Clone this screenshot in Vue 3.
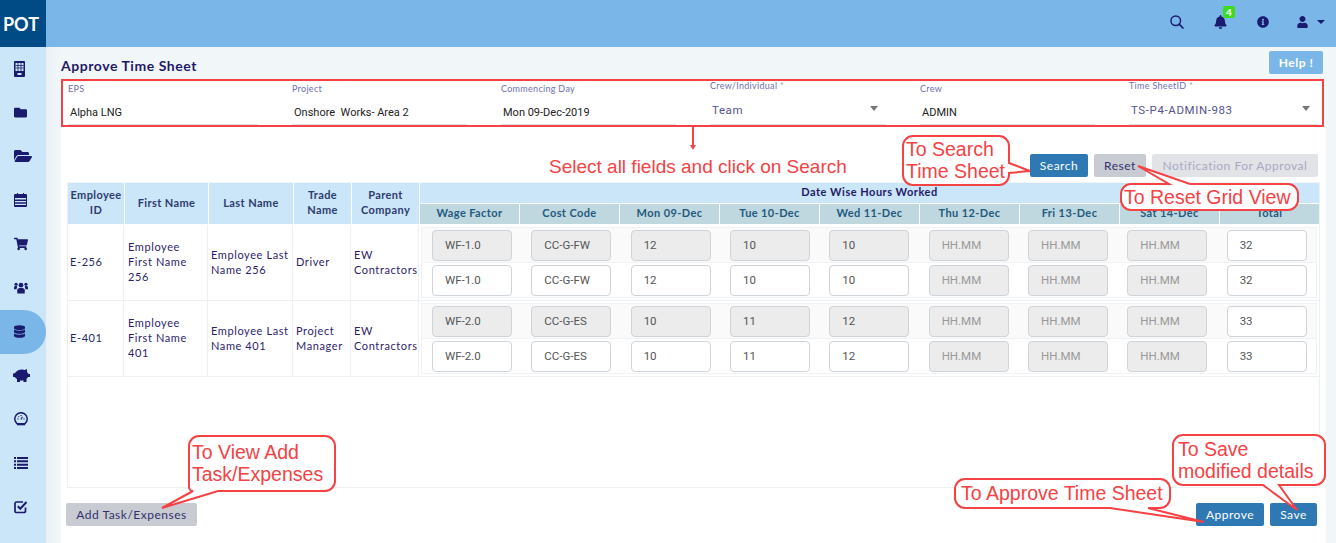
<script setup>
const filters = [
  { label: 'EPS', value: 'Alpha LNG', width: '190px' },
  { label: 'Project', value: 'Onshore  Works- Area 2', width: '175px' },
  { label: 'Commencing Day', value: 'Mon 09-Dec-2019', width: '175px' },
  { label: 'Crew/Individual', value: 'Team', width: '176px', select: true },
  { label: 'Crew', value: 'ADMIN', width: '175px' },
  { label: 'Time SheetID', value: 'TS-P4-ADMIN-983', width: '189px', select: true }
]

const days = ['Mon 09-Dec', 'Tue 10-Dec', 'Wed 11-Dec', 'Thu 12-Dec', 'Fri 13-Dec', 'Sat 14-Dec']
const subHeads = ['Wage Factor', 'Cost Code', ...days, 'Total']

const employees = [
  {
    id: 'E-256',
    first: 'Employee First Name 256',
    last: 'Employee Last Name 256',
    trade: 'Driver',
    company: 'EW Contractors',
    wage: 'WF-1.0',
    code: 'CC-G-FW',
    hours: ['12', '10', '10'],
    total: '32'
  },
  {
    id: 'E-401',
    first: 'Employee First Name 401',
    last: 'Employee Last Name 401',
    trade: 'Project Manager',
    company: 'EW Contractors',
    wage: 'WF-2.0',
    code: 'CC-G-ES',
    hours: ['10', '11', '12'],
    total: '33'
  }
]

function rowCells(emp, locked) {
  return [
    { text: emp.wage, locked },
    { text: emp.code, locked },
    ...emp.hours.map((h) => ({ text: h, locked })),
    { text: '', locked: true },
    { text: '', locked: true },
    { text: '', locked: true },
    { text: emp.total, locked: false }
  ]
}
</script>

<template>
  <div class="page">
    <header class="topbar">
      <div class="logo">POT</div>
      <div class="top-icons">
        <svg width="14" height="14" viewBox="0 0 512 512"><circle cx="210" cy="210" r="175" fill="none" stroke="#1a1a6e" stroke-width="52"/><path d="M335 335l140 140" stroke="#1a1a6e" stroke-width="62" stroke-linecap="round"/></svg>
        <span class="bell">
          <svg width="13" height="14" viewBox="0 0 448 512"><path fill="#1a1a6e" d="M224 512c35.32 0 63.97-28.65 63.97-64H160.03c0 35.35 28.65 64 63.97 64zm215.39-149.71c-19.32-20.76-55.47-51.99-55.47-154.29 0-77.7-54.48-139.9-127.94-155.16V32c0-17.67-14.32-32-31.98-32s-31.98 14.33-31.98 32v20.84C118.56 68.1 64.08 130.3 64.08 208c0 102.3-36.15 133.53-55.47 154.29-6 6.45-8.66 14.16-8.61 21.71.11 16.4 12.98 32 32.1 32h383.8c19.12 0 32-15.6 32.1-32 .05-7.55-2.61-15.27-8.61-21.71z"/></svg>
          <b class="badge">4</b>
        </span>
        <svg width="12" height="12" viewBox="0 0 512 512"><path fill="#1a1a6e" d="M256 8C119.043 8 8 119.083 8 256c0 136.997 111.043 248 248 248s248-111.003 248-248C504 119.083 392.957 8 256 8zm0 110c23.196 0 42 18.804 42 42s-18.804 42-42 42-42-18.804-42-42 18.804-42 42-42zm56 254c0 6.627-5.373 12-12 12h-88c-6.627 0-12-5.373-12-12v-24c0-6.627 5.373-12 12-12h12v-64h-12c-6.627 0-12-5.373-12-12v-24c0-6.627 5.373-12 12-12h64c6.627 0 12 5.373 12 12v100h12c6.627 0 12 5.373 12 12v24z"/></svg>
        <span class="user">
          <svg width="11" height="12" viewBox="0 0 448 512"><path fill="#1a1a6e" d="M224 256c70.7 0 128-57.3 128-128S294.7 0 224 0 96 57.3 96 128s57.3 128 128 128zm89.6 32h-16.7c-22.2 10.2-46.9 16-72.9 16s-50.6-5.8-72.9-16h-16.7C60.2 288 0 348.2 0 422.4V464c0 26.5 21.5 48 48 48h352c26.5 0 48-21.5 48-48v-41.6c0-74.2-60.2-134.4-134.4-134.4z"/></svg>
          <i class="user-caret"></i>
        </span>
      </div>
    </header>

    <div class="body">
      <nav class="sidebar">
        <div class="nav-item">
          <svg width="11" height="16" viewBox="0 0 11 16"><path fill="#1a1a6e" fill-rule="evenodd" d="M1 0h9a1 1 0 0 1 1 1v14a1 1 0 0 1-1 1H1a1 1 0 0 1-1-1V1a1 1 0 0 1 1-1zM1.500 2v8h8V2zM3.500 12v2h4v-2z"/><path stroke="#1a1a6e" stroke-width=".8" d="M1.500 4.500h8M1.500 7h8M4 2v8M7 2v8"/></svg>
        </div>
        <div class="nav-item">
          <svg width="13" height="13" viewBox="0 0 512 512"><path fill="#1a1a6e" d="M464 128H272l-64-64H48C21.49 64 0 85.49 0 112v288c0 26.51 21.49 48 48 48h416c26.51 0 48-21.49 48-48V176c0-26.51-21.49-48-48-48z"/></svg>
        </div>
        <div class="nav-item">
          <svg width="18" height="16" viewBox="0 0 576 512"><path fill="#1a1a6e" d="M572.694 292.093L500.27 416.248A63.997 63.997 0 0 1 444.989 448H45.025c-18.523 0-30.064-20.093-20.731-36.093l72.424-124.155A64 64 0 0 1 152 256h399.964c18.523 0 30.064 20.093 20.73 36.093zM152 224h328v-48c0-26.51-21.49-48-48-48H272l-64-64H48C21.49 64 0 85.49 0 112v278.046l69.077-118.418C86.214 242.250 117.989 224 152 224z"/></svg>
        </div>
        <div class="nav-item">
          <svg width="13" height="14" viewBox="0 0 13 14"><path fill="#1a1a6e" fill-rule="evenodd" d="M1 1h2V0h1v1h5V0h1v1h2a1 1 0 0 1 1 1v11a1 1 0 0 1-1 1H1a1 1 0 0 1-1-1V2a1 1 0 0 1 1-1zM1 5v1.500h11V5zM1 8v1.200h11V8zM1 10.700V12h11v-1.300z"/></svg>
        </div>
        <div class="nav-item">
          <svg width="14" height="14" viewBox="0 0 576 512"><path fill="#1a1a6e" d="M528.12 301.319l47.273-208C578.806 78.301 567.391 64 551.99 64H159.208l-9.166-44.81C147.758 8.021 137.93 0 126.529 0H24C10.745 0 0 10.745 0 24v16c0 13.255 10.745 24 24 24h69.883l70.248 343.435C147.325 417.1 136 435.222 136 456c0 30.928 25.072 56 56 56s56-25.072 56-56c0-15.674-6.447-29.835-16.824-40h209.647C430.447 426.165 424 440.326 424 456c0 30.928 25.072 56 56 56s56-25.072 56-56c0-22.172-12.888-41.332-31.579-50.405l5.517-24.276c3.413-15.018-8.002-29.319-23.403-29.319H218.117l-6.545-32h293.145c11.206 0 20.920-7.754 23.403-18.681z"/></svg>
        </div>
        <div class="nav-item">
          <svg width="14" height="13" viewBox="0 0 15 13"><g fill="#1a1a6e"><circle cx="7.500" cy="4" r="2.500"/><path d="M3.500 13V9.500C3.500 7.500 5 7 7.500 7s4 .5 4 2.500V13z"/><circle cx="2.200" cy="3" r="1.700"/><circle cx="12.800" cy="3" r="1.700"/><path d="M0 8V6.500C0 5.500 1 5 2.200 5c.6 0 1 .1 1.300.3C3.300 6.200 3 7 2.700 8.500H0zM15 8V6.500C15 5.500 14 5 12.800 5c-.6 0-1 .1-1.300.3.200.9.500 1.700.8 3.200H15z"/></g></svg>
        </div>
        <div class="nav-item active">
          <svg width="11" height="13" viewBox="0 0 448 512"><path fill="#1a1a6e" d="M448 73.143v45.714C448 159.143 347.667 192 224 192S0 159.143 0 118.857V73.143C0 32.857 100.333 0 224 0s224 32.857 224 73.143zM448 176v102.857C448 319.143 347.667 352 224 352S0 319.143 0 278.857V176c48.125 33.143 136.208 48.572 224 48.572S399.874 209.143 448 176zm0 160v102.857C448 479.143 347.667 512 224 512S0 479.143 0 438.857V336c48.125 33.143 136.208 48.572 224 48.572S399.874 369.143 448 336z"/></svg>
        </div>
        <div class="nav-item pig">
          <svg width="17" height="13" viewBox="0 0 17 13"><path fill="#1a1a6e" d="M3 3c1-1.500 3-2.500 6-2.500 1 0 2 .2 2.800.5L14 0v3c.8.700 1.200 1.400 1.400 2H17v3h-2c-.4.800-1 1.400-1.500 1.900V13h-3v-1.500H7V13H4V10C2.800 9.300 2.200 8.500 1.800 8H0V4.500c1 0 2 0 3-1.500z"/></svg>
        </div>
        <div class="nav-item">
          <svg width="14" height="14" viewBox="0 0 14 14"><path fill="none" stroke="#1a1a6e" stroke-width="1.500" d="M3.200 11.800a6.200 6.200 0 1 1 7.600 0"/><path fill="#1a1a6e" d="M3 11h8v2.300H3z"/><path stroke="#1a1a6e" stroke-width="1.100" d="M7 7.500l1.400-2.800M3.400 7h1.200M9.400 7h1.200M7 3v1M4.500 4.300l.7.700"/></svg>
        </div>
        <div class="nav-item">
          <svg width="14" height="12" viewBox="0 0 14 12"><path fill="#1a1a6e" d="M0 0h2v2H0zM3 0h11v2H3zM0 3.300h2v2H0zM3 3.300h11v2H3zM0 6.700h2v2H0zM3 6.700h11v2H3zM0 10h2v2H0zM3 10h11v2H3z"/></svg>
        </div>
        <div class="nav-item">
          <svg width="14" height="14" viewBox="0 0 14 14"><path fill="none" stroke="#1a1a6e" stroke-width="1.700" d="M11.500 7.500V11a1.500 1.500 0 0 1-1.500 1.500H2.500A1.500 1.500 0 0 1 1 11V3.500A1.500 1.500 0 0 1 2.500 2H9"/><path fill="none" stroke="#1a1a6e" stroke-width="2" d="M3.800 6.200L6.300 8.700 12.500 2"/></svg>
        </div>
      </nav>

      <main class="main">
        <div class="title-row">
          <h1>Approve Time Sheet</h1>
          <button class="btn help">Help !</button>
        </div>

        <section class="card">
          <div class="filters">
            <div v-for="f in filters" :key="f.label" class="field" :class="{ select: f.select }" :style="{ width: f.width }">
              <label>{{ f.label }}<span v-if="f.select" class="req"> *</span></label>
              <div class="field-value">
                {{ f.value }}
                <i v-if="f.select" class="caret"></i>
              </div>
            </div>
          </div>

          <div class="actions">
            <button class="btn primary search">Search</button>
            <button class="btn grey reset">Reset</button>
            <button class="btn pale notify">Notification For Approval</button>
          </div>

          <div class="grid-box">
            <div class="grid-head">
              <div class="hcell">Employee ID</div>
              <div class="hcell">First Name</div>
              <div class="hcell">Last Name</div>
              <div class="hcell">Trade Name</div>
              <div class="hcell">Parent Company</div>
              <div class="hgroup">
                <div class="hgroup-title">Date Wise Hours Worked</div>
                <div class="hsub">
                  <span v-for="s in subHeads" :key="s">{{ s }}</span>
                </div>
              </div>
            </div>

            <div v-for="emp in employees" :key="emp.id" class="grid-row">
              <div class="cell">{{ emp.id }}</div>
              <div class="cell">{{ emp.first }}</div>
              <div class="cell">{{ emp.last }}</div>
              <div class="cell">{{ emp.trade }}</div>
              <div class="cell">{{ emp.company }}</div>
              <div class="cell hours">
                <div v-for="(locked, n) in [true, false]" :key="n" class="hours-row" :class="{ shaded: locked }">
                  <div v-for="(c, i) in rowCells(emp, locked)" :key="i" class="hours-cell">
                    <input :value="c.text" :disabled="c.locked" placeholder="HH.MM" />
                  </div>
                </div>
              </div>
            </div>
          </div>

          <div class="footer">
            <button class="btn grey add">Add Task/Expenses</button>
            <div class="footer-right">
              <button class="btn primary">Approve</button>
              <button class="btn primary">Save</button>
            </div>
          </div>
        </section>
      </main>
    </div>

    <!-- red help callouts drawn over the screen -->
    <svg class="notes" width="1336" height="543" viewBox="0 0 1336 543">
      <path class="mark" d="M693 127v18" />
      <path class="head" d="M690 145h6l-3 5z" />
      <text x="549" y="173" class="note-sm">Select all fields and click on Search</text>

      <path class="mark fill" d="M913 136h86a10 10 0 0 1 10 10v17l21 8-21 2v2a10 10 0 0 1-10 10h-86a10 10 0 0 1-10-10v-29a10 10 0 0 1 10-10z" />
      <text x="906" y="156">To Search</text>
      <text x="906" y="178">Time Sheet</text>

      <path class="mark fill" d="M1131 184h38l-31-18 52 18h98a10 10 0 0 1 10 10v6a10 10 0 0 1-10 10h-157a10 10 0 0 1-10-10v-6a10 10 0 0 1 10-10z" />
      <text x="1124" y="204">To Reset Grid View</text>

      <path class="mark fill" d="M199 436h126a10 10 0 0 1 10 10v35a10 10 0 0 1-10 10H218l-56 17 31-17a4 4 0 0 1-4-4v-41a10 10 0 0 1 10-10z" />
      <text x="192" y="459">To View Add</text>
      <text x="192" y="481">Task/Expenses</text>

      <path class="mark fill" d="M965 479h195a10 10 0 0 1 10 10v9a10 10 0 0 1-10 10h-12l56 14-94-14H965a10 10 0 0 1-10-10v-9a10 10 0 0 1 10-10z" />
      <text x="961" y="500">To Approve Time Sheet</text>

      <path class="mark fill" d="M1183 435h132a10 10 0 0 1 10 10v30a10 10 0 0 1-10 10h-36l18 25-34-25h-80a10 10 0 0 1-10-10v-30a10 10 0 0 1 10-10z" />
      <text x="1178" y="456">To Save</text>
      <text x="1178" y="478">modified details</text>
    </svg>
  </div>
</template>

<style>
html,
body {
  margin: 0;
  overflow: hidden;
}
</style>

<style scoped>
.page {
  position: relative;
  width: 1336px;
  height: 543px;
  overflow: hidden;
  display: flex;
  flex-direction: column;
  font-family: Lato, sans-serif;
  color: #2a1f6e;
}

.topbar {
  height: 47px;
  flex: none;
  display: flex;
  align-items: center;
  justify-content: space-between;
  background: #7ab6e8;
}

.logo {
  width: 46px;
  height: 47px;
  box-sizing: border-box;
  padding-right: 4px;
  display: flex;
  align-items: center;
  justify-content: center;
  background: #004a85;
  color: #fff;
  font-size: 18px;
  font-weight: 700;
}

.top-icons {
  display: flex;
  align-items: center;
  gap: 30px;
  padding: 0 11px 3px 0;
}

.bell {
  position: relative;
  display: flex;
}

.badge {
  position: absolute;
  left: 9px;
  top: -9px;
  width: 12px;
  height: 12px;
  border-radius: 2px;
  background: #3ddc1f;
  color: #fff;
  font-size: 10px;
  line-height: 12px;
  text-align: center;
}

.user {
  display: flex;
  align-items: center;
  gap: 9px;
  margin-left: -2px;
}

.user-caret {
  border: 4px solid transparent;
  border-top: 4px solid #1a1a6e;
  border-bottom: 0;
}

.body {
  flex: 1;
  display: flex;
  min-height: 0;
}

.sidebar {
  width: 46px;
  flex: none;
  background: #cbe5f9;
}

.nav-item {
  height: 43.8px;
  display: flex;
  align-items: center;
  padding-left: 14px;
  box-sizing: border-box;
}

.nav-item.pig {
  padding-left: 13px;
}

.nav-item.active {
  background: #7ab6e8;
  border-radius: 0 22px 22px 0;
}

.main {
  flex: 1;
  display: flex;
  flex-direction: column;
  padding: 0 10px 0 15px;
  background: linear-gradient(90deg, #eaf0f5, #f1f6f9 14px);
}

.title-row {
  height: 32px;
  flex: none;
  display: flex;
  align-items: flex-start;
  justify-content: space-between;
  padding-right: 3px;
}

h1 {
  margin: 11px 0 0;
  font-size: 14px;
  font-weight: 700;
  letter-spacing: 0.55px;
  line-height: 15px;
  color: #1f1a66;
}

.btn {
  height: 23px;
  padding: 0;
  border: 0;
  border-radius: 2px;
  font-family: Lato, sans-serif;
  font-size: 12px;
  letter-spacing: 0.5px;
}

.help {
  margin-top: 4px;
  width: 54px;
  background: #7ab6e8;
  color: #fff;
  font-weight: 700;
}

.primary {
  background: #2e78b4;
  color: #fff;
}

.grey {
  background: #c8ccd2;
  color: #33306e;
}

.pale {
  background: #e1e3e7;
  color: #a9a9c4;
}

.search {
  width: 58px;
}

.reset {
  width: 52px;
}

.notify {
  width: 166px;
}

.add {
  width: 131px;
}

.card {
  flex: 1;
  display: flex;
  flex-direction: column;
  background: #fff;
}

.filters {
  height: 48px;
  width: 1263px;
  flex: none;
  box-sizing: border-box;
  display: grid;
  grid-template-columns: 224px 209px 209px 210px 209px 1fr;
  padding-left: 5px;
  border: 2px solid #f44245;
}

.field {
  height: 44px;
  border-bottom: 1px solid #dcdfe3;
  box-sizing: border-box;
}

.field label {
  display: block;
  margin-top: 2px;
  font-size: 9px;
  line-height: 11px;
  letter-spacing: 0.3px;
  color: #6f6fae;
}

.req {
  white-space: pre;
  color: #999;
}

.field-value {
  position: relative;
  margin-top: 12px;
  padding-left: 2px;
  font-family: Roboto, sans-serif;
  font-size: 11px;
  line-height: 14px;
  white-space: pre;
  color: #222;
}

.select label {
  margin-top: -1px;
}

.select .field-value {
  padding-left: 2px;
  font-size: 11.5px;
  letter-spacing: 0.6px;
  color: #55558e;
}

.caret {
  position: absolute;
  right: 8px;
  top: 3px;
  border: 4px solid transparent;
  border-top: 5px solid #777;
  border-bottom: 0;
}

.actions {
  height: 56px;
  flex: none;
  display: flex;
  align-items: flex-end;
  justify-content: flex-end;
  gap: 6px;
  padding: 0 8px 6px 0;
  box-sizing: border-box;
}

.grid-box {
  width: 1253px;
  height: 305px;
  margin-left: 6px;
  flex: none;
  box-sizing: border-box;
  border: 1px solid #eef1f4;
  border-top: 0;
  box-shadow: 0 -1px 0 #f2f4f6;
}

.grid-head,
.grid-row {
  display: grid;
  grid-template-columns: 56px 83px 84px 57px 67px 1fr;
  column-gap: 1px;
}

.grid-head {
  height: 41px;
}

.hcell {
  display: flex;
  align-items: center;
  justify-content: center;
  text-align: center;
  padding: 0 1px 3px;
  background: #cbe5f9;
  font-size: 11px;
  font-weight: 700;
  line-height: 15px;
  letter-spacing: 0.4px;
  color: #2d3c6e;
}

.hgroup-title {
  height: 20px;
  background: #cbe5f9;
  text-align: center;
  font-size: 11px;
  font-weight: 700;
  line-height: 18px;
  letter-spacing: 0.5px;
  color: #1f1a66;
}

.hsub {
  display: grid;
  grid-template-columns: repeat(9, 1fr);
  column-gap: 1px;
  margin-top: 1px;
}

.hsub span {
  height: 20px;
  background: #bfd7de;
  text-align: center;
  font-size: 11px;
  font-weight: 700;
  line-height: 18px;
  letter-spacing: 0.4px;
  color: #1f5a80;
}

.grid-row {
  height: 76px;
  box-sizing: border-box;
  border-bottom: 1px solid #eef1f4;
}

.grid-head + .grid-row {
  margin-top: 1px;
}

.cell {
  display: flex;
  align-items: center;
  padding: 0 2px 2px;
  border-right: 1px solid #eef1f4;
  font-size: 11px;
  line-height: 15px;
  letter-spacing: 0.6px;
  color: #2e1d6b;
}

.cell:nth-child(1) {
  color: #1f2a66;
}

.cell:nth-child(2) {
  padding-left: 3px;
}

.hours {
  display: block;
  padding: 2px 2px 0 1px;
  border-right: 0;
}

.hours-row {
  display: grid;
  grid-template-columns: repeat(9, 1fr);
  height: 36px;
  align-items: center;
  box-sizing: border-box;
  border: 1px solid #f0f2f4;
}

.hours-row.shaded {
  background: #fafafa;
  border-bottom: 0;
  height: 35px;
}

.hours-cell {
  padding-left: 10px;
}

input {
  display: block;
  width: 80px;
  height: 31px;
  box-sizing: border-box;
  padding: 0 12px;
  border: 1px solid #ced4da;
  border-radius: 4px;
  background: #fff;
  font-family: Roboto, sans-serif;
  font-size: 11.5px;
  color: #555;
  opacity: 1;
}

input:disabled {
  background: #ececec;
}

input::placeholder {
  color: #999;
  opacity: 1;
}

.footer {
  display: flex;
  justify-content: space-between;
  padding: 15px 9px 0 5px;
}

.footer-right {
  display: flex;
  gap: 6px;
}

.footer-right .btn:first-child {
  width: 68px;
}

.footer-right .btn:last-child {
  width: 47px;
}

.notes {
  position: absolute;
  left: 0;
  top: 0;
  pointer-events: none;
}

.notes text {
  font-family: 'Liberation Sans', Arial, sans-serif;
  font-size: 19.500px;
  fill: #f44245;
}

.notes text.note-sm {
  font-size: 19px;
}

.mark {
  fill: none;
  stroke: #f44245;
  stroke-width: 2;
}

.mark.fill {
  fill: #fff;
}

.head {
  fill: #f44245;
}
</style>
